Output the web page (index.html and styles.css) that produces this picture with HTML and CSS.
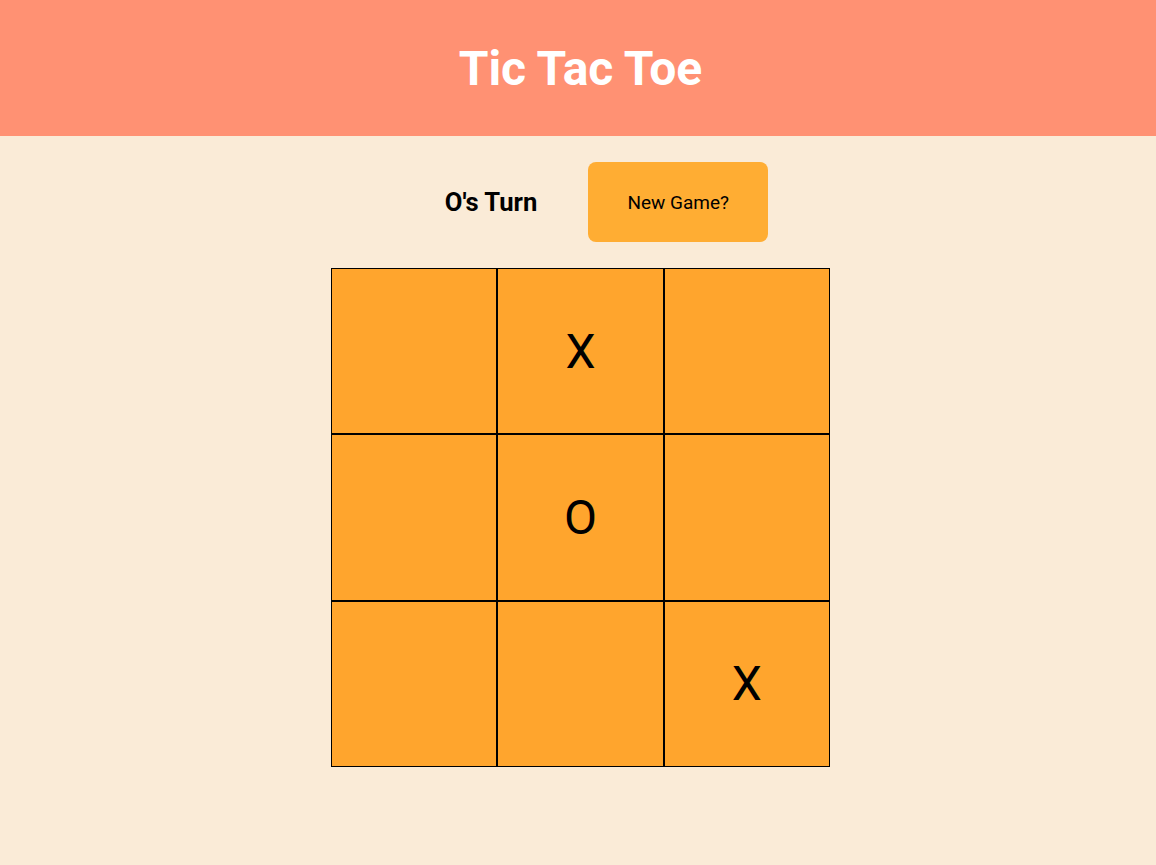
FILE: index.html
```html
<!DOCTYPE html>
<html>
<head>
<meta charset="utf-8">
<link rel="stylesheet" href="styles.css">
</head>
<body>
<header class="header"><h1 class="title">Tic Tac Toe</h1></header>
<main class="main">
  <div class="controls">
    <div class="turn">O's Turn</div>
    <button class="new-game">New Game?</button>
  </div>
  <div class="board">
    <div class="cell"></div>
    <div class="cell">X</div>
    <div class="cell"></div>
    <div class="cell"></div>
    <div class="cell">O</div>
    <div class="cell"></div>
    <div class="cell"></div>
    <div class="cell"></div>
    <div class="cell">X</div>
  </div>
</main>
</body>
</html>
```
FILE: styles.css
```css
html, body {
  margin: 0;
  padding: 0;
  background: #faebd7;
  font-family: Roboto, "Liberation Sans", sans-serif;
  color: #000;
  min-height: 100%;
}
.header {
  height: 136px;
  background: #ff9173;
  display: flex;
  align-items: center;
  justify-content: center;
}
.title {
  margin: 0 0 0 5px;
  color: #fff;
  font-size: 48px;
  font-weight: 700;
  letter-spacing: -0.1px;
}
.main {
  display: flex;
  flex-direction: column;
  align-items: center;
}
.controls {
  margin-top: 26px;
  display: flex;
  align-items: center;
  gap: 51px;
  padding-left: 57px;
}
.turn {
  font-size: 25.6px;
  font-weight: 700;
}
.new-game {
  width: 180px;
  height: 80px;
  border: none;
  border-radius: 8px;
  background: #ffad33;
  font-family: Roboto, "Liberation Sans", sans-serif;
  font-size: 19px;
  color: #000;
}
.board {
  margin-top: 26px;
  margin-left: 5px;
  width: 499px;
  height: 499px;
  display: grid;
  grid-template-columns: repeat(3, 1fr);
  grid-template-rows: repeat(3, 1fr);
}
.cell {
  box-sizing: border-box;
  border: 1px solid #000;
  background: #ffa52d;
  display: flex;
  align-items: center;
  justify-content: center;
  font-size: 48px;
}
```
